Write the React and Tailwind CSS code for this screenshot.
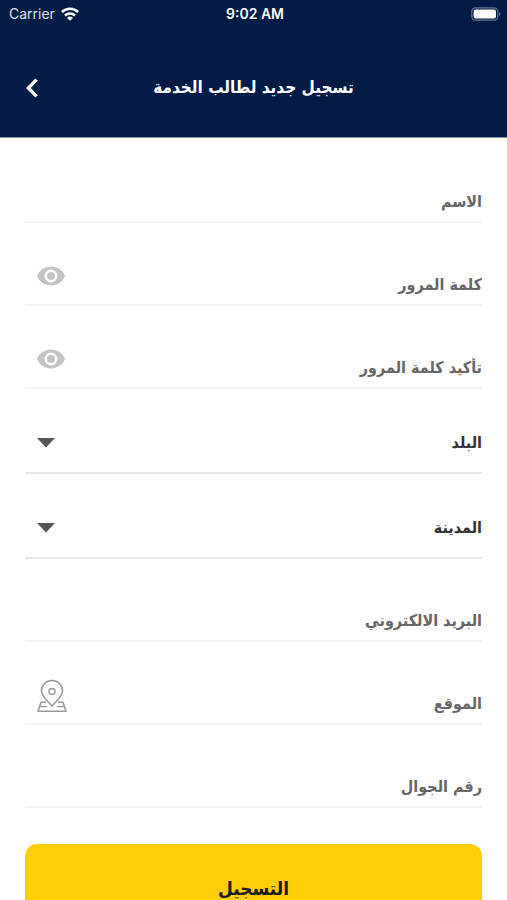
import { useState } from 'react';

const textRow = 'flex h-[83px] items-end border-b-2 border-[#f5f5f5]';
const inputStyle =
  'h-10 min-w-0 flex-1 bg-transparent text-right text-base font-bold text-[#333] outline-none placeholder:text-[#666] placeholder:opacity-100';

function WifiIcon() {
  return (
    <svg viewBox="0 0 18 14" className="h-3.5 w-[18px]" fill="none" stroke="currentColor" strokeWidth="2.6">
      <path d="M.9 5a11.6 11.6 0 0 1 16.200 0" />
      <path d="M4 8.500a7.200 7.200 0 0 1 10 0" />
      <path d="M9 13.800 6 10.900a4.300 4.300 0 0 1 6 0Z" fill="currentColor" stroke="none" />
    </svg>
  );
}

function BatteryIcon() {
  return (
    <svg viewBox="0 0 30 14" className="h-3.5 w-[30px]" fill="none">
      <rect x="0.8" y="0.8" width="26" height="12.4" rx="3.6" stroke="#66748f" strokeWidth="1.2" />
      <rect x="2.6" y="2.6" width="22.4" height="8.8" rx="2" fill="#fff" />
      <path d="M28.2 4.8c1.8.8 1.8 3.6 0 4.4Z" fill="#66748f" />
    </svg>
  );
}

function EyeIcon() {
  return (
    <svg viewBox="0 0 28 20" className="h-5 w-7">
      <path d="M0 10C2.4 4.2 7.6.6 14 .6S25.6 4.200 28 10c-2.400 5.800-7.600 9.400-14 9.400S2.400 15.800 0 10Z" fill="#c1c4c6" />
      <circle cx="14" cy="10" r="5.2" fill="#c1c4c6" stroke="#fff" strokeWidth="2.4" />
    </svg>
  );
}

function MapPinIcon() {
  return (
    <svg
      viewBox="0 0 30 34"
      className="h-[34px] w-[30px]"
      fill="none"
      stroke="#96999c"
      strokeWidth="1.5"
      strokeLinejoin="round"
    >
      <path d="M15 27C11.500 22.500 4.500 18 4.500 12a10.500 10.500 0 0 1 21 0c0 6-7 10.500-10.500 15Z" />
      <circle cx="15" cy="12.5" r="3" />
      <path d="M9 23.200H4l-3 9h28l-3-9h-5" />
      <path d="M3 27.600h7M20 27.600h7" strokeWidth="1.3" />
    </svg>
  );
}

function TextField({ name, label, type = 'text', children }) {
  return (
    <div className={textRow}>
      <input name={name} type={type} dir="rtl" aria-label={label} placeholder={label} className={inputStyle} />
      {children}
    </div>
  );
}

function PasswordField({ name, label }) {
  const [visible, setVisible] = useState(false);

  return (
    <TextField name={name} label={label} type={visible ? 'text' : 'password'}>
      <button
        type="button"
        aria-label="إظهار كلمة المرور"
        aria-pressed={visible}
        onClick={() => setVisible(!visible)}
        className="mb-[18px] ml-3"
      >
        <EyeIcon />
      </button>
    </TextField>
  );
}

function SelectField({ name, label }) {
  return (
    <div className="grid h-[85px] items-center border-b-2 border-[#e7e7e7] pt-6">
      <select
        name={name}
        aria-label={label}
        className="col-start-1 row-start-1 h-10 w-full appearance-none bg-transparent text-base font-bold text-[#333] outline-none"
      >
        <option>{label}</option>
      </select>
      <svg viewBox="0 0 18 10" className="pointer-events-none col-start-1 row-start-1 ml-3 h-2.5 w-[18px] justify-self-end">
        <path d="M0 0h18L9 9.5Z" fill="#555" />
      </svg>
    </div>
  );
}

export default function App() {
  return (
    <div
      dir="rtl"
      lang="ar"
      className="flex h-screen flex-col bg-[#fefefe] font-['DejaVu_Sans_Condensed','DejaVu_Sans',sans-serif]"
    >
      {/* Header */}
      <header className="shrink-0 border-b border-[#8c96aa] bg-[#001b46] text-white">
        <div dir="ltr" className="grid h-7 grid-cols-3 items-center pr-1.5 pl-[9px] font-[Inter,sans-serif] text-sm">
          <div className="flex items-center gap-1.5 text-[#dce1ea]">
            <span>Carrier</span>
            <span className="text-white"><WifiIcon /></span>
          </div>
          <span className="text-center font-semibold">9:02 AM</span>
          <span className="justify-self-end"><BatteryIcon /></span>
        </div>

        <div dir="ltr" className="grid h-[109px] grid-cols-[40px_1fr_40px] items-center px-3 pt-2.5">
          <button type="button" aria-label="رجوع" className="flex h-10 items-center justify-center">
            <svg viewBox="0 0 12 20" className="h-5 w-3" fill="none" stroke="currentColor" strokeWidth="3.4">
              <path d="M10.6 1.6 2.4 10l8.200 8.400" />
            </svg>
          </button>
          <h1 dir="rtl" className="text-center text-[17px] font-bold">تسجيل جديد لطالب الخدمة</h1>
        </div>
      </header>

      {/* Form */}
      <main className="min-h-0 flex-1 overflow-y-auto px-[25px] pt-0.5 pb-8 [scrollbar-width:none]">
        <form onSubmit={(e) => e.preventDefault()}>
          <TextField name="name" label="الاسم" />
          <PasswordField name="password" label="كلمة المرور" />
          <PasswordField name="confirm" label="تأكيد كلمة المرور" />
          <SelectField name="country" label="البلد" />
          <SelectField name="city" label="المدينة" />
          <TextField name="email" label="البريد الالكتروني" type="email" />
          <TextField name="location" label="الموقع">
            <button type="button" aria-label="تحديد الموقع" className="mb-2.5 ml-3">
              <MapPinIcon />
            </button>
          </TextField>
          <TextField name="phone" label="رقم الجوال" type="tel" />

          <button
            type="submit"
            className="mt-9 h-[88px] w-full rounded-xl bg-[#ffce06] text-[19px] font-bold text-[#1c1c1c]"
          >
            التسجيل
          </button>
        </form>
      </main>
    </div>
  );
}
